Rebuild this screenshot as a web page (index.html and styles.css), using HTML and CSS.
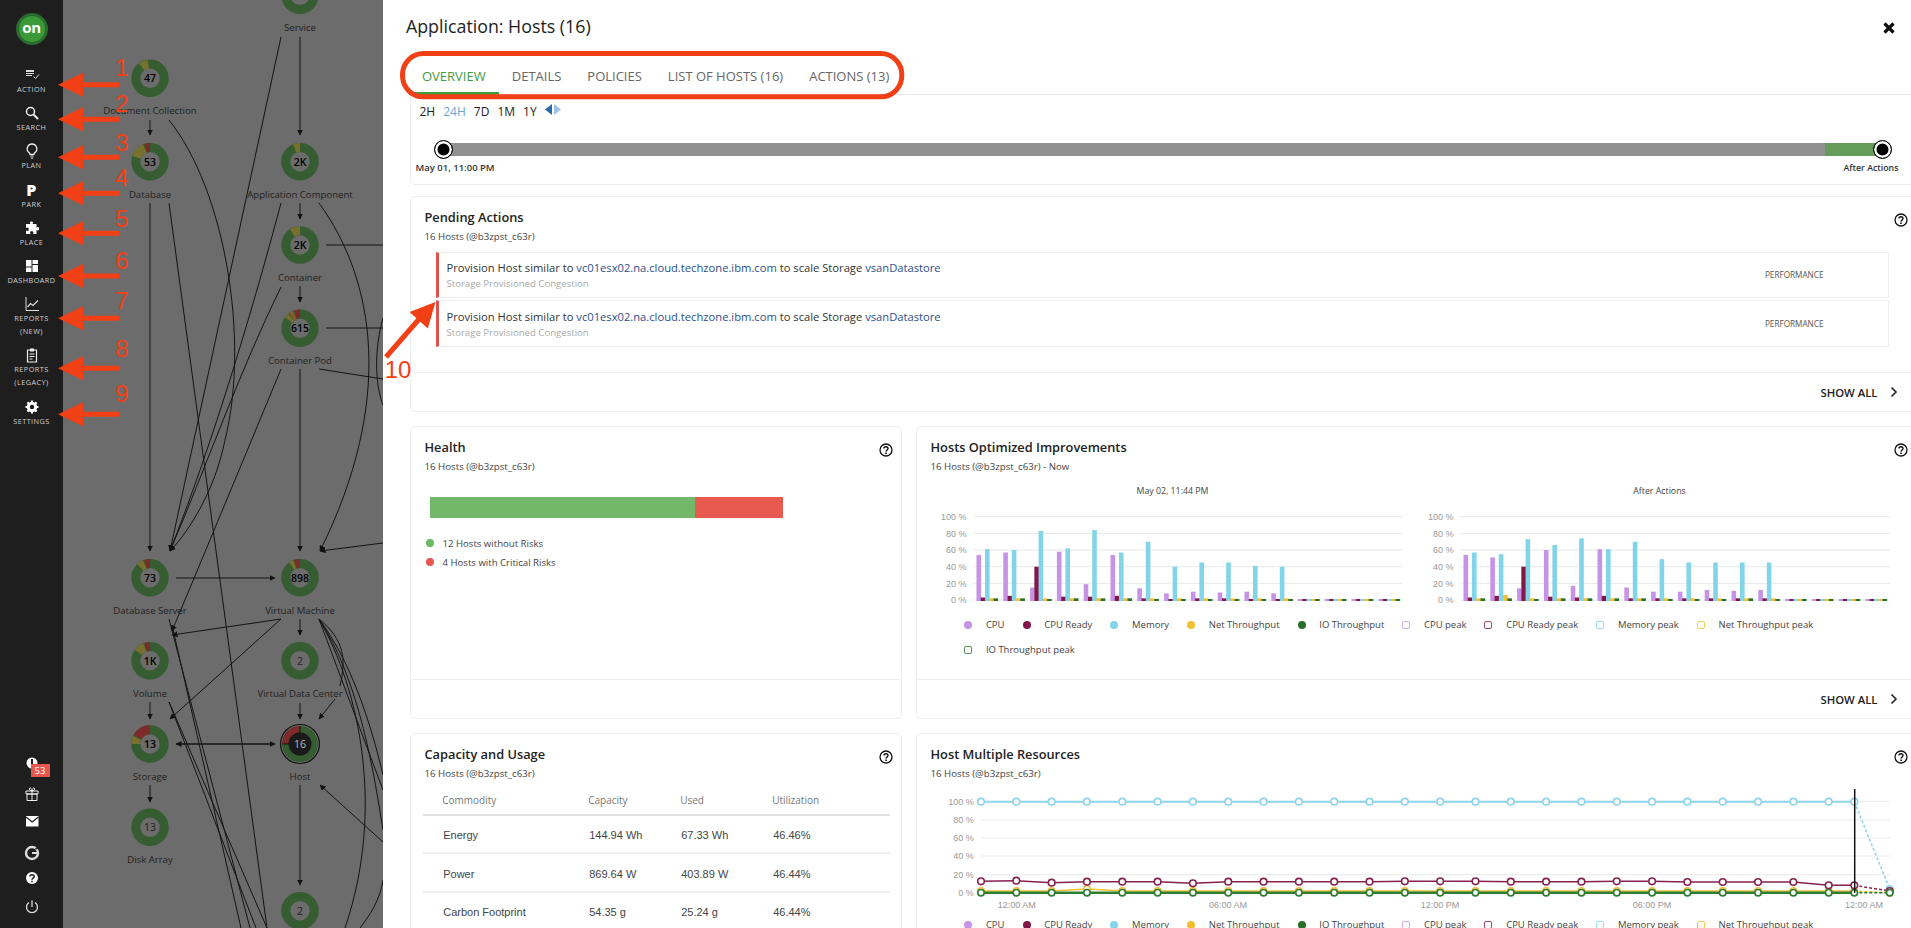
FILE: index.html
```html
<!DOCTYPE html>
<html lang="en">
<head>
<meta charset="utf-8">
<title>Application: Hosts (16)</title>
<link rel="stylesheet" href="styles.css">
</head>
<body>
<div class="app">
  <aside class="sidebar">
    <div class="logo"><span>on</span></div>
    <nav class="nav">
      <a class="nav-item"><svg class="ico" viewBox="0 0 16 16"><path d="M2 4h8v1H2zM2 6h8v1H2zM2 8h6v1H2z" fill="#ddd"/><path d="M2 3h8v2H2z" fill="#ddd"/><path d="M9.500 9.500l2 2 3.500-4" fill="none" stroke="#ddd" stroke-width="1"/></svg><span>Action</span></a>
      <a class="nav-item"><svg class="ico" viewBox="0 0 16 16"><circle cx="6.500" cy="6.500" r="4" fill="none" stroke="#eee" stroke-width="1.500"/><path d="M9.500 9.500l4.500 4.500" stroke="#eee" stroke-width="2"/></svg><span>Search</span></a>
      <a class="nav-item"><svg class="ico" viewBox="0 0 16 16"><path d="M8 1a4.800 4.800 0 0 0-2.800 8.700c.5.4.8 1 .8 1.600h4c0-.6.3-1.200.8-1.600A4.800 4.800 0 0 0 8 1z" fill="none" stroke="#eee" stroke-width="1.300"/><path d="M6.300 13h3.400M6.800 15h2.400" stroke="#eee" stroke-width="1.200"/></svg><span>Plan</span></a>
      <a class="nav-item"><i class="park">P</i><span>Park</span></a>
      <a class="nav-item"><svg class="ico" viewBox="0 0 16 16"><path d="M6 2.500C6 1 9 1 9 2.500c0 .8-.4 1-.4 1.500h3.900v3.500c.5 0 .8-.5 1.500-.5 1.500 0 1.500 3.500 0 3.500-.7 0-1-.5-1.500-.5V14H9c0-.6.5-1 .5-1.600 0-1.500-3.500-1.500-3.500 0 0 .6.500 1 .500 1.600H2v-3.500c.6 0 1 .5 1.600.5 1.500 0 1.500-3.500 0-3.500-.6 0-1 .5-1.600.5V4h4.400C6.400 3.500 6 3.300 6 2.500z" fill="#fff"/></svg><span>Place</span></a>
      <a class="nav-item"><svg class="ico" viewBox="0 0 16 16"><path d="M2 2h5.500v6.500H2zM8.500 2H14v4H8.500zM2 9.500h5.500V14H2zM8.500 7H14v7H8.500z" fill="#fff"/></svg><span>Dashboard</span></a>
      <a class="nav-item"><svg class="ico" viewBox="0 0 16 16"><path d="M2 1v13.500h13" fill="none" stroke="#ddd" stroke-width="1"/><path d="M3.500 11l3-3.500 2.500 2L14 4.500" fill="none" stroke="#ddd" stroke-width="1.200"/></svg><span>Reports<br>(New)</span></a>
      <a class="nav-item"><svg class="ico" viewBox="0 0 16 16"><path d="M3.500 3h9v12h-9z" fill="none" stroke="#eee" stroke-width="1.200"/><path d="M6 1.500h4V4.500H6z" fill="#eee"/><path d="M5.500 7h5M5.500 9.500h5M5.500 12h3" stroke="#eee" stroke-width="1"/></svg><span>Reports<br>(Legacy)</span></a>
      <a class="nav-item"><svg class="ico" viewBox="0 0 16 16"><circle cx="8" cy="8" r="3.700" fill="none" stroke="#fff" stroke-width="3"/><path d="M8 1.500v13M1.500 8h13M3.400 3.400l9.200 9.200M12.600 3.400l-9.200 9.200" stroke="#fff" stroke-width="2.200" stroke-dasharray="2.500 8 2.500"/></svg><span>Settings</span></a>
    </nav>
    <div class="foot">
      <a class="foot-item foot-info"><svg class="ico-f" viewBox="0 0 16 16"><circle cx="8" cy="8" r="5.500" fill="#fff"/><path d="M8 4v5" stroke="#1e1e1e" stroke-width="2"/></svg><b class="badge">53</b></a>
      <a class="foot-item foot-gift"><svg class="ico-f" viewBox="0 0 16 16"><path d="M2 5h12v3H2zM3 8h10v6.500H3zM8 5v9.500M8 5C5 5 4.500 1.500 6.500 2 7.500 2.300 8 5 8 5c0 0 .5-2.700 1.500-3C11.500 1.500 11 5 8 5z" fill="none" stroke="#eee" stroke-width="1"/></svg></a>
      <a class="foot-item foot-mail"><svg class="ico-f" viewBox="0 0 16 16"><path d="M2 3h12.500v10.500H2z" fill="#fff"/><path d="M2 4l6.200 5 6.300-5" fill="none" stroke="#1e1e1e" stroke-width="1.200"/></svg></a>
      <a class="foot-item foot-g"><svg class="ico-f" viewBox="0 0 16 16"><circle cx="8" cy="8" r="6" fill="none" stroke="#ddd" stroke-width="2.400"/><path d="M8 8h5.500" stroke="#ddd" stroke-width="2"/><path d="M11.500 4.200l2.500-1.500" stroke="#1e1e1e" stroke-width="1.500"/></svg></a>
      <a class="foot-item foot-help"><svg class="ico-f" viewBox="0 0 16 16"><circle cx="8" cy="8" r="6" fill="#fff"/><path d="M5.900 6.500C5.900 4 10.200 4 10.200 6.500c0 1.700-2.200 1.500-2.200 3.200" fill="none" stroke="#1e1e1e" stroke-width="1.500"/><path d="M7.200 10.700h1.600v1.500H7.200z" fill="#1e1e1e"/></svg></a>
      <a class="foot-item foot-power"><svg class="ico-f" viewBox="0 0 16 16"><path d="M5 3.500a5.500 5.500 0 1 0 6 0" fill="none" stroke="#ddd" stroke-width="1.300"/><path d="M8 1.500V8" stroke="#ddd" stroke-width="1.300"/></svg></a>
    </div>
  </aside>

  <section class="canvas"><svg id="topology" class="topology" width="320" height="928" viewBox="63 0 320 928"></svg></section>

  <main class="panel">
    <header class="panel-head">
      <h1>Application: Hosts (16)</h1>
      <svg class="close" viewBox="0 0 12 12"><path d="M1.500 1.500l9 9M10.500 1.500l-9 9" stroke="#111" stroke-width="3.200"/></svg>
    </header>
    <div class="tabs">
      <a class="tab active">Overview</a>
      <a class="tab">Details</a>
      <a class="tab">Policies</a>
      <a class="tab">List of Hosts (16)</a>
      <a class="tab">Actions (13)</a>
    </div>

    <div class="cards">
      <section class="timeline">
        <div class="ranges">
          <span>2H</span><span class="sel">24H</span><span>7D</span><span>1M</span><span>1Y</span>
          <svg class="shift" viewBox="0 0 16 11"><path d="M7 0v11L0 5.500z" fill="#2a6ca8"/><path d="M9 0v11l7-5.500z" fill="#9cc3e4"/></svg>
        </div>
        <div class="slider">
          <div class="track-grey"></div><div class="track-green"></div>
          <i class="handle handle-l"></i><i class="handle handle-r"></i>
        </div>
        <div class="slider-labels"><b>May 01, 11:00 PM</b><b class="after">After Actions</b></div>
      </section>

      <section class="card pending">
        <svg class="help" viewBox="0 0 14 14"><use href="#help-glyph"/></svg>
        <h2>Pending Actions</h2>
        <p class="sub">16 Hosts (@b3zpst_c63r)</p>
        <div class="act-row">
          <div class="act-main">
            <div class="act-text">Provision Host similar to <a>vc01esx02.na.cloud.techzone.ibm.com</a> to scale Storage <a>vsanDatastore</a></div>
            <div class="act-risk">Storage Provisioned Congestion</div>
          </div>
          <span class="act-cat">PERFORMANCE</span>
        </div>
        <div class="act-row">
          <div class="act-main">
            <div class="act-text">Provision Host similar to <a>vc01esx02.na.cloud.techzone.ibm.com</a> to scale Storage <a>vsanDatastore</a></div>
            <div class="act-risk">Storage Provisioned Congestion</div>
          </div>
          <span class="act-cat">PERFORMANCE</span>
        </div>
        <div class="card-foot wide-foot"><span>SHOW ALL</span><svg class="chev" viewBox="0 0 10 12"><path d="M2.500 1.500L7 6l-4.500 4.500" fill="none" stroke="#222" stroke-width="1.600"/></svg></div>
      </section>

      <div class="grid">
        <section class="card health">
          <svg class="help help-narrow" viewBox="0 0 14 14"><use href="#help-glyph"/></svg>
          <h2>Health</h2>
          <p class="sub">16 Hosts (@b3zpst_c63r)</p>
          <div class="hbar"><i class="hbar-ok"></i><i class="hbar-crit"></i></div>
          <ul class="hlegend">
            <li><i class="dot ok"></i>12 Hosts without Risks</li>
            <li><i class="dot crit"></i>4 Hosts with Critical Risks</li>
          </ul>
          <div class="card-foot"></div>
        </section>

        <section class="card improve">
          <svg class="help" viewBox="0 0 14 14"><use href="#help-glyph"/></svg>
          <h2>Hosts Optimized Improvements</h2>
          <p class="sub">16 Hosts (@b3zpst_c63r) - Now</p>
          <div class="charts">
            <figure class="bars"><figcaption>May 02, 11:44 PM</figcaption><svg id="bars-now" width="487" height="110"></svg></figure>
            <figure class="bars"><figcaption>After Actions</figcaption><svg id="bars-after" width="487" height="110"></svg></figure>
          </div>
          <ul class="legend">
            <li><i class="mk cpu"></i>CPU</li><li><i class="mk rdy"></i>CPU Ready</li><li><i class="mk mem"></i>Memory</li><li><i class="mk net"></i>Net Throughput</li><li><i class="mk io"></i>IO Throughput</li>
            <li><i class="bx cpu"></i>CPU peak</li><li><i class="bx rdy"></i>CPU Ready peak</li><li><i class="bx mem"></i>Memory peak</li><li><i class="bx net"></i>Net Throughput peak</li><li><i class="bx io"></i>IO Throughput peak</li>
          </ul>
          <div class="card-foot wide-foot"><span>SHOW ALL</span><svg class="chev" viewBox="0 0 10 12"><path d="M2.500 1.500L7 6l-4.500 4.500" fill="none" stroke="#222" stroke-width="1.600"/></svg></div>
        </section>

        <section class="card capacity">
          <svg class="help help-narrow" viewBox="0 0 14 14"><use href="#help-glyph"/></svg>
          <h2>Capacity and Usage</h2>
          <p class="sub">16 Hosts (@b3zpst_c63r)</p>
          <table class="cap">
            <thead><tr><th>Commodity</th><th>Capacity</th><th>Used</th><th>Utilization</th></tr></thead>
            <tbody>
              <tr><td>Energy</td><td>144.94 Wh</td><td>67.33 Wh</td><td>46.46%</td></tr>
              <tr><td>Power</td><td>869.64 W</td><td>403.89 W</td><td>46.44%</td></tr>
              <tr><td>Carbon Footprint</td><td>54.35 g</td><td>25.24 g</td><td>46.44%</td></tr>
            </tbody>
          </table>
        </section>

        <section class="card multi">
          <svg class="help" viewBox="0 0 14 14"><use href="#help-glyph"/></svg>
          <h2>Host Multiple Resources</h2>
          <p class="sub">16 Hosts (@b3zpst_c63r)</p>
          <svg id="lines" class="lines" width="990" height="134" viewBox="916 782 990 134"></svg>
          <ul class="legend">
            <li><i class="mk cpu"></i>CPU</li><li><i class="mk rdy"></i>CPU Ready</li><li><i class="mk mem"></i>Memory</li><li><i class="mk net"></i>Net Throughput</li><li><i class="mk io"></i>IO Throughput</li>
            <li><i class="bx cpu"></i>CPU peak</li><li><i class="bx rdy"></i>CPU Ready peak</li><li><i class="bx mem"></i>Memory peak</li><li><i class="bx net"></i>Net Throughput peak</li>
          </ul>
        </section>
      </div>
    </div>
  </main>
</div>

<svg class="annotations" width="1911" height="928" viewBox="0 0 1911 928">
  <defs>
    <path id="red-arrow" d="M58 0L83-12V-2.500H119V2.500H83V12Z"/>
    <symbol id="help-glyph" viewBox="0 0 14 14"><circle cx="7" cy="7" r="6" fill="none" stroke="#111" stroke-width="1.300"/><path d="M5 5.600C5 3.200 9 3.200 9 5.600c0 1.600-2 1.300-2 3" fill="none" stroke="#111" stroke-width="1.400"/><path d="M6.200 9.400h1.600v1.500H6.200z" fill="#111"/></symbol>
  </defs>
  <g class="red-fill">
    <use href="#red-arrow" y="84.700"/><use href="#red-arrow" y="119.300"/><use href="#red-arrow" y="157.300"/>
    <use href="#red-arrow" y="193.300"/><use href="#red-arrow" y="233.300"/><use href="#red-arrow" y="276"/>
    <use href="#red-arrow" y="318.300"/><use href="#red-arrow" y="368.300"/><use href="#red-arrow" y="414.300"/>
    <path d="M435.500 302L409.500 312 427.800 328.500Z"/>
  </g>
  <path class="red-line" d="M386 357L420 318"/>
  <rect class="red-line" x="402.500" y="53.500" width="499.300" height="43.300" rx="21"/>
  <g class="red-num">
    <text x="122" y="76">1</text><text x="122" y="112">2</text><text x="122" y="151">3</text>
    <text x="122" y="186">4</text><text x="122" y="227">5</text><text x="122" y="269">6</text>
    <text x="122" y="309">7</text><text x="122" y="357">8</text><text x="122" y="402">9</text>
    <text x="398" y="378">10</text>
  </g>
</svg>
<script src="app.js"></script>
</body>
</html>
```
FILE: styles.css
```css
* { box-sizing: border-box; }
html, body { margin: 0; height: 100%; overflow: hidden; background: #fff; }
body { font-family: "Open Sans", "Liberation Sans", sans-serif; color: #222; }
a { text-decoration: none; color: inherit; }
h1, h2, p, ul, figure { margin: 0; padding: 0; }
ul { list-style: none; }
i { font-style: normal; display: block; }

.app { display: flex; width: 1911px; height: 928px; overflow: hidden; }

/* Sidebar */
.sidebar { flex: 0 0 63px; background: #1e1e1e; display: flex; flex-direction: column; align-items: center; color: #d0d0d0; position: relative; }
.logo { width: 32px; height: 32px; margin-top: 13px; border-radius: 50%; background: #3b9a37; border: 3px solid #2a6b30; display: flex; align-items: center; justify-content: center; color: #fff; font-weight: 700; font-size: 15px; line-height: 1; letter-spacing: -.3px; }
.logo span { margin-top: -3px; }
.nav { display: flex; flex-direction: column; gap: 9.2px; margin-top: 22px; width: 100%; }
.nav-item { display: flex; flex-direction: column; align-items: center; text-transform: uppercase; font-size: 7.300px; line-height: 13px; letter-spacing: .45px; text-align: center; }
.ico { width: 16px; height: 16px; display: block; }
.park { width: 16px; height: 16px; font-size: 16px; line-height: 16px; font-weight: 800; color: #fff; text-align: center; }
.foot { position: absolute; left: 0; right: 0; top: 755px; display: flex; flex-direction: column; align-items: center; }
.foot-item { position: relative; height: 16px; display: block; }
.ico-f { width: 16px; height: 16px; display: block; }
.foot-gift { margin-top: 14.700px; }
.foot-mail { margin-top: 11.300px; }
.foot-g { margin-top: 16px; }
.foot-help { margin-top: 9.400px; }
.foot-power { margin-top: 12.600px; }
.badge { position: absolute; left: 7px; top: 9px; width: 19px; height: 13px; background: #e8574d; color: #fff; font-size: 9.500px; font-weight: 400; line-height: 13px; text-align: center; }

/* Canvas */
.canvas { flex: 0 0 320px; background: #6c6c6c; overflow: hidden; }
.topology { display: block; }

/* Panel */
.panel { flex: 0 0 1528px; background: #fff; overflow: hidden; height: 928px; }
.panel-head { height: 51px; display: flex; justify-content: space-between; align-items: flex-start; padding: 0 16px 0 23px; }
.panel-head h1 { font-size: 17.800px; font-weight: 400; line-height: 24px; margin-top: 14px; color: #222; }
.close { width: 12px; height: 12px; margin-top: 22px; }
.tabs { height: 44px; display: flex; margin-left: 26px; border-bottom: 1px solid #e9e9e9; align-items: stretch; }
.tab { padding: 0 13px; font-size: 13px; line-height: 50px; color: #666; text-transform: uppercase; font-weight: 400; height: 44px; }
.tab.active { color: #3f9c3f; border-bottom: 3px solid #3f9c3f; }

.cards { width: 1516px; margin-left: 26.500px; }
.timeline { height: 90px; border: 1px solid #eee; border-top: 0; border-radius: 0 0 5px 5px; padding-top: 8px; }
.ranges { display: flex; align-items: center; gap: 8px; padding-left: 9px; font-size: 12px; line-height: 18px; color: #222; }
.sel { color: #6aa5d6; }
.shift { width: 16px; height: 11px; margin-top: -6px; }
.slider { position: relative; display: flex; height: 13px; margin: 22px 42px 0 32px; }
.track-grey { flex: 1; background: #919191; }
.track-green { flex: 0 0 58px; background: #659c59; }
.handle { position: absolute; top: -3px; width: 19px; height: 19px; border-radius: 50%; background: #000; border: 1.500px solid #000; box-shadow: inset 0 0 0 2.500px #fff; }
.handle-l { left: -9px; }
.handle-r { right: -9px; }
.slider-labels { display: flex; justify-content: space-between; align-items: center; margin: 5px 26px 0 5px; font-size: 9.500px; line-height: 14px; color: #333; }
.slider-labels b { font-weight: 600; }
.slider-labels .after { font-size: 8.800px; }

.card { position: relative; display: flex; flex-direction: column; border: 1px solid #eee; border-radius: 5px; padding-top: 10px; background: #fff; }
.card h2 { font-size: 12.800px; line-height: 20px; font-weight: 600; color: #222; margin-left: 14px; }
.sub { font-size: 9.700px; line-height: 16px; margin: 1.500px 0 0 14px; color: #444; }
.help { position: absolute; right: 17px; top: 16px; width: 14px; height: 14px; }
.help-narrow { right: 7.500px; }
.card-foot { height: 39px; margin-top: auto; border-top: 1px solid #eee; flex: none; }
.wide-foot { display: flex; align-items: center; justify-content: flex-end; gap: 11px; font-size: 11.300px; font-weight: 600; padding-right: 26px; color: #222; }
.chev { width: 10px; height: 12px; }

.pending { margin-top: 11px; height: 216px; }
.act-row { display: flex; align-items: flex-start; height: 46.500px; margin: 0 36px 2px 25px; border: 1px solid #eee; border-left: 3.500px solid #dc524c; padding: 7.500px 0 0 8px; }
.act-row:first-of-type { margin-top: 7px; }
.act-main { flex: 1; }
.act-text { font-size: 11.200px; line-height: 16px; color: #333; }
.act-text a { color: #2b4f8c; }
.act-risk { font-size: 9.600px; line-height: 15px; color: #aaa; }
.act-cat { font-size: 8.200px; line-height: 14px; color: #555; margin: 8px 64px 0 0; }

.grid { display: grid; grid-template-columns: 492px 1010px; column-gap: 14px; row-gap: 14px; margin-top: 14px; }
.health, .improve { height: 293px; }
.capacity, .multi { height: 300px; }
.hbar { display: flex; width: 353.400px; height: 21px; margin: 22px 0 0 19.500px; }
.hbar-ok { flex: 3; background: #73b86a; }
.hbar-crit { flex: 1; background: #e85a50; }
.hlegend { margin: 16px 0 0 15px; font-size: 9.600px; line-height: 19px; color: #444; }
.hlegend li { display: flex; align-items: center; gap: 9px; }
.dot { width: 8px; height: 8px; border-radius: 50%; }
.dot.ok { background: #6cb963; }
.dot.crit { background: #e8574d; }

.charts { display: flex; margin: 10.500px 0 0 12.500px; }
.bars { width: 487px; }
.bars figcaption { font-size: 8.800px; line-height: 12px; text-align: center; color: #444; }
.bars svg { display: block; margin-top: 3px; }

.legend { display: flex; flex-wrap: wrap; gap: 9px 18px; padding-left: 47.700px; width: 960px; margin-top: 7px; font-size: 9.500px; line-height: 16px; color: #444; }
.legend li { display: flex; align-items: center; gap: 13.700px; }
.mk { width: 8px; height: 8px; border-radius: 50%; }
.bx { width: 8px; height: 8px; border-radius: 2px; border: 1px solid; background: #fff; opacity: .8; }
.mk.cpu { background: #c793e6; } .mk.rdy { background: #82184a; } .mk.mem { background: #82d4e8; } .mk.net { background: #f0c030; } .mk.io { background: #2a6f2a; }
.bx.cpu { border-color: #c793e6; } .bx.rdy { border-color: #82184a; } .bx.mem { border-color: #82d4e8; } .bx.net { border-color: #f0c030; } .bx.io { border-color: #2a6f2a; }

.cap { border-collapse: collapse; table-layout: fixed; width: 467px; margin: 3.500px 0 0 12px; }
.cap th { height: 30px; padding: 0 0 0 19.700px; text-align: left; font-size: 10px; font-weight: 400; color: #777; border-bottom: 2px solid #e2e2e2; }
.cap td { height: 38.400px; padding: 2px 0 0 20.700px; font: 11px "Liberation Sans", Arial, sans-serif; color: #444; border-bottom: 2px solid #eee; }
.cap th:nth-child(1) { width: 146px; }
.cap th:nth-child(2), .cap th:nth-child(3) { width: 92px; }

.lines { display: block; margin-top: .5px; flex: none; }
.multi .legend { margin-top: 1px; }

/* Annotation layer, over the whole screenshot */
.annotations { position: absolute; left: 0; top: 0; pointer-events: none; }
.red-fill { fill: #f13f16; }
.red-line { fill: none; stroke: #f13f16; stroke-width: 5; }
.red-num { fill: #f13f16; font: 24px "Liberation Sans", Arial, sans-serif; text-anchor: middle; }
```
FILE: app.js
```js
(function () {
  var GREEN = '#365c32', OLIVE = '#77702f', RED = '#7c2b2a', ORANGE = '#8a5b2e';

  function ring(cx, cy, label, name, segs, grey) {
    var s = '<circle cx="' + cx + '" cy="' + cy + '" r="14.200" fill="none" stroke="' + GREEN + '" stroke-width="9"/>';
    segs.forEach(function (g) {
      var len = g[2] - g[1];
      s += '<circle cx="' + cx + '" cy="' + cy + '" r="14.200" fill="none" stroke="' + g[0] + '" stroke-width="9" pathLength="100" stroke-dasharray="' + len + ' ' + (100 - len) + '" stroke-dashoffset="' + (len + g[1]) + '" transform="rotate(-90 ' + cx + ' ' + cy + ')"/>';
    });
    s += '<text class="n" x="' + cx + '" y="' + (cy + 3.8) + '" font-size="10.500" text-anchor="middle" fill="' + (grey ? '#222' : '#000') + '" font-family="Open Sans" font-weight="' + (grey ? 400 : 600) + '">' + label + '</text>';
    if (name) s += '<text x="' + cx + '" y="' + (cy + 35.800) + '" font-size="9.600" text-anchor="middle" fill="#222" font-family="Open Sans">' + name + '</text>';
    return s;
  }

  var arrows = [
    'M300 37V135', 'M150 120V135', 'M300 203V219', 'M300 286V302', 'M150 203V551', 'M300 369V551',
    'M281 37L170 551', 'M281 203C250 320 210 450 170 551', 'M281 287C240 370 205 470 170 551',
    'M169 120C225 190 250 340 225 440C215 490 190 530 170 551',
    'M319 203C375 280 395 400 320 551', 'M383 543L320 551',
    'M281 369C260 420 210 540 172 631', 'M281 619L172 635', 'M281 619L170 719', 'M300 619V635', 'M300 703V719',
    'M335 699L319 719', 'M176 578H275', 'M150 702V719', 'M176 744H275', 'M275 744H176', 'M150 785V802',
    'M300 785V885', 'M383 842L320 785'
  ];
  var plain = [
    'M326 245H383', 'M326 328H383', 'M319 369L383 379', 'M383 318C374 350 375 385 383 405',
    'M169 203L267 928', 'M169 619L250 928', 'M172 625L241 928', 'M169 702L267 928', 'M169 702L256 928',
    'M319 619C345 640 346 660 340 686', 'M319 619L383 790', 'M319 619C350 660 370 720 383 775',
    'M319 619C360 690 385 810 345 928', 'M319 619C360 680 375 780 383 830', 'M383 880C380 900 370 915 360 928'
  ];

  var topo = '<defs><marker id="tip" markerWidth="6" markerHeight="6" refX="5.500" refY="3" orient="auto-start-reverse" markerUnits="userSpaceOnUse"><path d="M0 0L6 3L0 6Z" fill="#111"/></marker></defs><g fill="none" stroke="#141414" stroke-width="1">';
  plain.forEach(function (d) { topo += '<path d="' + d + '"/>'; });
  arrows.forEach(function (d) { topo += '<path d="' + d + '" marker-end="url(#tip)"/>'; });
  topo += '</g>';
  topo += ring(300, -4.700, '', 'Service', [], true);
  topo += ring(150, 78.300, '47', 'Document Collection', [[OLIVE, 2, 10]]);
  topo += ring(150, 161.700, '53', 'Database', [[RED, 0, 5], [OLIVE, 6, 20]]);
  topo += ring(300, 161.700, '2K', 'Application Component', [[OLIVE, 0, 6]]);
  topo += ring(300, 245, '2K', 'Container', [[OLIVE, 0, 9]]);
  topo += ring(300, 328.300, '615', 'Container Pod', [[RED, 0, 5], [ORANGE, 6, 10], [OLIVE, 11, 15]]);
  topo += ring(150, 577.700, '73', 'Database Server', [[RED, 0, 5], [OLIVE, 6, 12]]);
  topo += ring(300, 577.700, '898', 'Virtual Machine', [[RED, 0, 5], [OLIVE, 6, 10]]);
  topo += ring(150, 660.700, '1K', 'Volume', [[RED, 0, 5], [OLIVE, 6, 15]]);
  topo += ring(300, 660.700, '2', 'Virtual Data Center', [], true);
  topo += ring(150, 744, '13', 'Storage', [[RED, 0, 17], [OLIVE, 18, 25]]);
  topo += ring(150, 827.300, '13', 'Disk Array', [], true);
  topo += ring(300, 910.700, '2', '', [], true);
  // selected node: Host
  topo += '<circle cx="300" cy="744" r="19.500" fill="#6c6c6c" stroke="#111" stroke-width="1.200"/>' +
    '<circle cx="300" cy="744" r="14.500" fill="none" stroke="' + GREEN + '" stroke-width="7"/>' +
    '<path d="M300 729.500A14.500 14.500 0 0 0 285.500 744" fill="none" stroke="' + RED + '" stroke-width="7"/>' +
    '<path d="M300 726V737M282 744H289" stroke="#111" stroke-width="1"/>' +
    '<circle cx="300" cy="744" r="11.500" fill="#1a1a1a"/>' +
    '<text x="300" y="748" font-size="10.500" text-anchor="middle" fill="#bbb" font-family="Open Sans">16</text>' +
    '<text x="300" y="779.800" font-size="9.600" text-anchor="middle" fill="#222" font-family="Open Sans">Host</text>';
  document.getElementById('topology').innerHTML = topo;

  // Bar charts
  var COL = { cpu: '#c793e6', rdy: '#82184a', mem: '#82d4e8', net: '#f0c030', io: '#2a6f2a' };
  function bars(id, d) {
    var s = '', ticks = [100, 80, 60, 40, 20, 0];
    ticks.forEach(function (t) {
      var y = 100 - t * 0.833;
      s += '<line x1="44.500" x2="473.500" y1="' + y + '" y2="' + y + '" stroke="#e8e8e8"/>' +
        '<text x="37.500" y="' + (y + 3.2) + '" font-size="9" text-anchor="end" fill="#999" font-family="Liberation Sans">' + t + ' %</text>';
    });
    ['cpu', 'rdy', 'mem', 'net', 'io'].forEach(function (k, j) {
      d[k].forEach(function (v, i) {
        var h = Math.max(v * 0.833, 1) + 1;
        s += '<rect x="' + (47.500 + i * 26.800 + j * 4.250) + '" y="' + (101 - h) + '" width="4.600" height="' + h + '" fill="' + COL[k] + '"/>';
      });
    });
    document.getElementById(id).innerHTML = s;
  }
  bars('bars-now', {
    cpu: [54, 57, 15, 58, 19, 54, 14, 8, 10, 9, 10, 8, 1, 1, 1, 1],
    rdy: [3, 5, 40, 4, 4, 5, 2, 1, 2, 2, 1, 1, 1, 1, 1, 1],
    mem: [61, 60, 83, 62, 84, 57, 70, 40, 45, 45, 41, 40, 1, 1, 1, 1],
    net: [2, 2, 2, 2, 2, 2, 2, 2, 2, 2, 2, 2, 1, 1, 1, 1],
    io: [2, 2, 1, 2, 2, 2, 1, 1, 1, 1, 1, 1, 1, 1, 1, 1]
  });
  bars('bars-after', {
    cpu: [54, 51, 14, 60, 17, 61, 15, 10, 10, 12, 11, 12, 1, 1, 1, 1],
    rdy: [3, 5, 40, 4, 3, 5, 2, 2, 2, 2, 2, 2, 1, 1, 1, 1],
    mem: [57, 55, 73, 66, 74, 61, 70, 49, 45, 45, 45, 45, 1, 1, 1, 1],
    net: [2, 6, 2, 2, 2, 2, 2, 2, 2, 2, 2, 2, 1, 1, 1, 1],
    io: [2, 2, 1, 2, 2, 2, 2, 1, 1, 1, 2, 1, 1, 1, 1, 1]
  });

  // Line chart (page coordinates through the viewBox)
  var xs = [];
  for (var i = 0; i < 25; i++) xs.push(980 + i * 35.320);
  xs.push(1853.300);
  var END_X = 1888.700, ZERO = 892.700;
  var s = '';
  [[100, 801.700], [80, 820], [60, 838], [40, 856], [20, 874.700], [0, ZERO]].forEach(function (t) {
    s += '<line x1="980" x2="1889" y1="' + t[1] + '" y2="' + t[1] + '" stroke="#ebebeb"/>' +
      '<text x="972.700" y="' + (t[1] + 3.2) + '" font-size="9" text-anchor="end" fill="#999" font-family="Liberation Sans">' + t[0] + ' %</text>';
  });
  [['12:00 AM', 1015.700], ['06:00 AM', 1227], ['12:00 PM', 1439], ['06:00 PM', 1651], ['12:00 AM', 1863]].forEach(function (t) {
    s += '<text x="' + t[1] + '" y="908" font-size="9" text-anchor="middle" fill="#999" font-family="Liberation Sans">' + t[0] + '</text>';
  });
  function series(ys, color, w, r, endY) {
    var pts = ys.map(function (y, i) { return xs[i] + ',' + y; }).join(' ');
    var o = '<polyline points="' + pts + '" fill="none" stroke="' + color + '" stroke-width="' + w + '"/>';
    o += '<line x1="' + xs[25] + '" y1="' + ys[25] + '" x2="' + END_X + '" y2="' + endY + '" stroke="' + color + '" stroke-width="1.500" stroke-dasharray="3 2"/>';
    ys.forEach(function (y, i) { o += '<circle cx="' + xs[i] + '" cy="' + y + '" r="' + r + '" fill="#fff" stroke="' + color + '" stroke-width="1.600"/>'; });
    o += '<circle cx="' + END_X + '" cy="' + endY + '" r="' + r + '" fill="#fff" stroke="' + color + '" stroke-width="1.600"/>';
    return o;
  }
  function fill(v) { var a = []; for (var k = 0; k < 26; k++) a.push(v); return a; }
  var net = fill(891); net[3] = 889;
  var rdy = [454, 452, 458, 455, 455, 455, 460, 455, 455, 455, 455, 455, 454, 454, 454, 455, 455, 455, 454, 454, 456, 456, 456, 456, 466, 466].map(function (v) { return v / 3 + 730; });
  s += series(fill(801.700), '#8ed3ec', 2, 3.300, 889);
  s += series(net, '#f0c030', 1.500, 3.200, ZERO);
  s += series(rdy, '#87204f', 1.500, 3.300, 891);
  s += series(fill(ZERO), '#2e7d32', 2.500, 3.200, ZERO);
  s += '<line x1="1853.700" x2="1853.700" y1="789" y2="' + ZERO + '" stroke="#111" stroke-width="1.500"/>';
  document.getElementById('lines').innerHTML = s;
})();
```
